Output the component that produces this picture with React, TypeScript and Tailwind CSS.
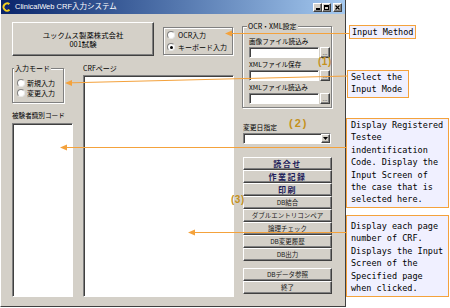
import React from "react";

const sunken =
  "bg-white border border-t-[#808080] border-l-[#808080] border-b-white border-r-white shadow-[inset_1px_1px_0_#404040]";
const raised =
  "bg-[#d4d0c8] border border-t-white border-l-white border-b-[#404040] border-r-[#404040] shadow-[inset_-1px_-1px_0_#808080]";
const etched =
  "border border-[#808080] shadow-[inset_1px_1px_0_#ffffff,1px_1px_0_#ffffff]";

function Radio({ checked }: { checked?: boolean }) {
  return (
    <span className="flex items-center justify-center w-[8px] h-[8px] rounded-full bg-white border border-t-[#808080] border-l-[#808080] border-b-[#e8e8e8] border-r-[#e8e8e8] shrink-0">
      {checked && <span className="block w-[3px] h-[3px] rounded-full bg-black" />}
    </span>
  );
}

function RadioRow({ label, checked, h, gap }: { label: string; checked?: boolean; h: string; gap: string }) {
  return (
    <div className={`flex items-center ${h} ${gap}`}>
      <Radio checked={checked} />
      <span className="text-[7px] leading-none text-black whitespace-nowrap">{label}</span>
    </div>
  );
}

function FileRow() {
  return (
    <div className="mt-[1px] flex">
      <div className={`w-[70px] h-[11px] ${sunken}`} />
      <div className={`ml-[1px] w-[10px] h-[11px] ${raised} flex items-end justify-center`}>
        <span className="text-[6px] leading-[7px] text-black font-['Liberation_Sans',sans-serif]">...</span>
      </div>
    </div>
  );
}

function SmallLabel({ children, mt }: { children: React.ReactNode; mt: string }) {
  return <div className={`${mt} h-[9px] text-[6.6px] leading-[9px] text-black whitespace-nowrap`}>{children}</div>;
}

function Btn({ label, bold }: { label: string; bold?: boolean }) {
  return (
    <div className={`h-[13px] ${raised} flex items-center justify-center`}>
      {bold ? (
        <span className="text-[8px] leading-none font-bold tracking-[1.5px] text-[#1c1c5a]">{label}</span>
      ) : (
        <span className="text-[6.5px] leading-none text-[#202020] whitespace-nowrap">{label}</span>
      )}
    </div>
  );
}

function Logo() {
  return (
    <svg width="10" height="10" viewBox="0 0 10 10">
      <path d="M7.5 2.2 A3.6 3.6 0 1 0 7.5 7.8" stroke="#f5d020" strokeWidth="2" fill="none" />
      <path d="M3 5 L4.6 7 L9 1.5" stroke="#1a2a7a" strokeWidth="1.3" fill="none" />
    </svg>
  );
}

export default function App() {
  return (
    <div className="relative w-[450px] h-[308px] bg-white overflow-hidden font-['Noto_Sans_CJK_JP','Noto_Sans',sans-serif]">
      {/* Window */}
      <div className="w-[346px] h-[307px] bg-[#d4d0c8] border-l border-l-white border-r border-r-[#404040] border-b border-b-[#404040] flex flex-col">
        {/* Title bar */}
        <div className="h-[14px] flex items-center bg-linear-to-r from-[#0a246a] to-[#a6caf0] pl-[1px] pr-[3px]">
          <Logo />
          <span className="ml-[3px] text-white text-[7.5px] leading-none font-normal whitespace-nowrap font-['Liberation_Sans','Noto_Sans_CJK_JP',sans-serif]">
            ClinicalWeb CRF入力システム
          </span>
          <div className="ml-auto flex items-center">
            <div className={`w-[9px] h-[9px] ${raised} flex items-end justify-center pb-[1px]`}>
              <span className="block w-[4px] h-[2px] bg-black" />
            </div>
            <div className={`w-[9px] h-[9px] ${raised} flex items-center justify-center`}>
              <span className="block w-[5px] h-[5px] border border-black border-t-2" />
            </div>
            <div className={`ml-[2px] w-[9px] h-[9px] ${raised} flex items-center justify-center`}>
              <svg width="5" height="5" viewBox="0 0 5 5">
                <path d="M0.5 0.5 L4.5 4.5 M4.5 0.5 L0.5 4.5" stroke="#000" strokeWidth="1.2" />
              </svg>
            </div>
          </div>
        </div>

        {/* Body */}
        <div className="flex pl-[11px] pt-[8px]">
          {/* Left area */}
          <div className="w-[222px] flex flex-col">
            <div className="flex h-[34px]">
              <div className={`w-[142px] h-[34px] ${raised} flex flex-col items-center justify-center gap-[1px] text-[7.4px] leading-[8px] text-black`}>
                <span>ユックムス製薬株式会社</span>
                <span>001試験</span>
              </div>
              <div className={`ml-[9px] mt-[5px] w-[70px] h-[28px] ${etched} pl-[3px] pt-[1px] flex flex-col`}>
                <RadioRow label="OCR入力" h="h-[12px]" gap="gap-[3px]" />
                <RadioRow label="キーボード入力" checked h="h-[12px]" gap="gap-[3px]" />
              </div>
            </div>

            <div className="flex mt-[8px]">
              <div className="w-[61px] flex flex-col">
                <fieldset className={`w-[52px] ${etched}`}>
                  <legend className="ml-[1px] px-[1px] text-[7px] leading-[9px] text-black bg-[#d4d0c8]">入力モード</legend>
                  <div className="pl-[4px] pt-[5px] pb-[4px] flex flex-col">
                    <RadioRow label="新規入力" h="h-[10px]" gap="gap-[2px]" />
                    <RadioRow label="変更入力" h="h-[10px]" gap="gap-[2px]" />
                  </div>
                </fieldset>
                <div className="mt-[8px] h-[9px] text-[6.6px] leading-[9px] text-black whitespace-nowrap">被験者識別コード</div>
                <div className={`mt-[3px] h-[174px] ${sunken}`} />
              </div>
              <div className="ml-[10px] w-[151px] flex flex-col">
                <div className="h-[9px] text-[7px] leading-[9px] text-black">CRFページ</div>
                <div className={`mt-[2px] h-[222px] ${sunken}`} />
              </div>
            </div>
          </div>

          {/* Right column */}
          <div className="ml-[8px] w-[90px] flex flex-col">
            <fieldset className={etched}>
              <legend className="ml-[4px] px-[1px] text-[7px] leading-[9px] text-black bg-[#d4d0c8]">OCR・XML設定</legend>
              <div className="pl-[6px] pb-[3px] flex flex-col">
                <SmallLabel mt="mt-[6px]">画像ファイル読込み</SmallLabel>
                <FileRow />
                <SmallLabel mt="mt-[2px]">XMLファイル保存</SmallLabel>
                <FileRow />
                <SmallLabel mt="mt-[2px]">XMLファイル読込み</SmallLabel>
                <FileRow />
              </div>
            </fieldset>

            <div className="mt-[15px] pl-[1px] h-[9px] text-[6.8px] leading-[9px] text-black">変更日指定</div>
            <div className={`mt-[1px] ml-[1px] w-[88px] h-[11px] ${sunken} flex justify-end`}>
              <div className={`w-[9px] h-full ${raised} flex items-center justify-center`}>
                <svg width="5" height="3" viewBox="0 0 5 3">
                  <path d="M0 0 H5 L2.5 3 Z" fill="#000" />
                </svg>
              </div>
            </div>

            <div className="mt-[13px] ml-[1px] w-[89px] flex flex-col">
              <Btn label="読合せ" bold />
              <Btn label="作業記録" bold />
              <Btn label="印刷" bold />
              <Btn label="DB結合" />
              <Btn label="ダブルエントリコンペア" />
              <Btn label="論理チェック" />
              <Btn label="DB変更履歴" />
              <Btn label="DB出力" />
            </div>
            <div className="mt-[7px] ml-[1px] w-[89px] flex flex-col">
              <Btn label="DBデータ参照" />
              <Btn label="終了" />
            </div>
          </div>
        </div>
      </div>

      {/* Annotation numbers */}
      <span className="absolute left-[318px] top-[56px] text-[10px] leading-[12px] font-bold tracking-[0.5px] text-[#c4901c] font-['Liberation_Sans',sans-serif]">(1)</span>
      <span className="absolute left-[289px] top-[117px] text-[11px] leading-[12px] font-bold tracking-[2px] text-[#c4901c] font-['Liberation_Sans',sans-serif]">(2)</span>
      <span className="absolute left-[231px] top-[194px] text-[10px] leading-[12px] font-bold tracking-[0.5px] text-[#c4901c] font-['Liberation_Sans',sans-serif]">(3)</span>

      {/* Leader lines */}
      <svg className="absolute left-0 top-0 pointer-events-none" width="450" height="308">
        <g stroke="#f4a23c" strokeWidth="1" fill="none">
          <line x1="231" y1="33.5" x2="350" y2="33.5" />
          <line x1="71" y1="82.8" x2="348" y2="76" />
          <line x1="66" y1="147.5" x2="347" y2="147.5" />
          <line x1="194" y1="232.5" x2="347" y2="232.5" />
        </g>
        <g fill="#f4a23c">
          <polygon points="225,33.5 232,30.5 232,36.5" />
          <polygon points="65,83 72,80 72,86" />
          <polygon points="60,147.5 67,144.5 67,150.5" />
          <polygon points="188,232.5 195,229.5 195,235.5" />
        </g>
      </svg>

      {/* Callouts */}
      <div className="absolute left-[349px] top-[25px] w-[67px] h-[14px] bg-[#f0f0ff] border border-[#f4a23c] pl-[2px] font-['DejaVu_Sans_Mono',monospace] text-[8.5px] leading-[12px] text-black whitespace-nowrap">
        Input Method
      </div>
      <div className="absolute left-[347px] top-[70px] w-[62px] h-[28px] bg-[#f0f0ff] border border-[#f4a23c] pl-[3px] font-['DejaVu_Sans_Mono',monospace] text-[8.5px] leading-[12.4px] text-black whitespace-nowrap">
        Select the
        <br />
        Input Mode
      </div>
      <div className="absolute left-[346px] top-[118px] w-[103px] h-[90px] bg-[#f0f0ff] border border-[#f4a23c] pl-[4px] font-['DejaVu_Sans_Mono',monospace] text-[8.5px] leading-[12.4px] text-black whitespace-nowrap">
        Display Registered
        <br />
        Testee
        <br />
        indentification
        <br />
        Code. Display the
        <br />
        Input Screen of
        <br />
        the case that is
        <br />
        selected here.
      </div>
      <div className="absolute left-[346px] top-[215px] w-[103px] h-[82px] bg-[#f0f0ff] border border-[#f4a23c] pl-[4px] pt-[4px] font-['DejaVu_Sans_Mono',monospace] text-[8.5px] leading-[12.4px] text-black whitespace-nowrap">
        Display each page
        <br />
        number of CRF.
        <br />
        Displays the Input
        <br />
        Screen of the
        <br />
        Specified page
        <br />
        when clicked.
      </div>
    </div>
  );
}
